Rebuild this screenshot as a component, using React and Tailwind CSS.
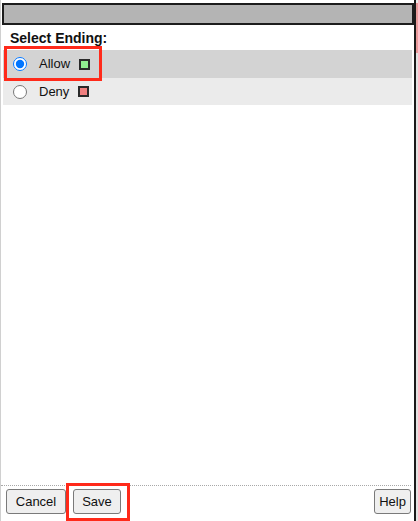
import React from "react";

const options = [
  { label: "Allow", color: "bg-[#90ee90]", checked: true, row: "bg-[#d3d3d3] h-[28px]" },
  { label: "Deny", color: "bg-[#f08080]", checked: false, row: "bg-[#ebebeb] h-[27px]" },
];

export default function App() {
  return (
    <div
      className="relative flex w-[418px] h-[521px] bg-white text-[#111]"
      style={{ fontFamily: '"Liberation Sans", Arial, sans-serif' }}
    >
      {/* main panel */}
      <div className="flex flex-col w-[414px] h-full border-l border-[#d0d0d0]">
        <div className="mt-[3px] ml-[1px] h-[22px] border-2 border-[#1c1c1c] bg-[#b4b4b4]" />

        <div className="mt-[5px] pl-[9px] text-[14px] leading-[16px] font-bold">
          Select Ending:
        </div>

        <div className="mt-[4px] ml-[2px] mr-[2px]">
          {options.map((opt) => (
            <div key={opt.label} className={`flex items-center pl-[10px] ${opt.row}`}>
              <input
                type="radio"
                name="ending"
                checked={opt.checked}
                readOnly
                className="m-0 w-[14px] h-[14px]"
              />
              <span className="ml-[12px] text-[13px] leading-[16px]">{opt.label}</span>
              <span className={`ml-[9px] w-[11px] h-[11px] border-2 border-[#2a2a2a] ${opt.color}`} />
            </div>
          ))}
        </div>

        <div className="flex-1" />

        <div className="mr-[3px] border-t border-dotted border-[#a8a8a8] pt-[3px] pb-[7px] pl-[5px] flex items-center">
          <button className="h-[25px] w-[60px] rounded-[3px] border border-[#7a7a7a] bg-[#efefef] text-[13px]">
            Cancel
          </button>
          <button className="ml-[7px] h-[25px] w-[48px] rounded-[3px] border border-[#7a7a7a] bg-[#efefef] text-[13px]">
            Save
          </button>
          <div className="flex-1" />
          <button className="h-[25px] w-[37px] rounded-[3px] border border-[#7a7a7a] bg-[#efefef] text-[13px]">
            Help
          </button>
        </div>
      </div>

      {/* panel edge */}
      <div className="w-[2px] h-full bg-[#1a1a1a]" />
      <div className="flex flex-col w-[2px] h-full bg-[#e2e2e2]">
        <div className="h-[3px] bg-[#ececec]" />
        <div className="h-[50px] bg-[#e99a9a]" />
      </div>

      {/* annotation highlights */}
      <div className="absolute left-[4px] top-[46px] w-[98px] h-[35px] border-[3px] border-[#ff2a1a]" />
      <div className="absolute left-[66px] top-[483px] w-[64px] h-[38px] border-[3px] border-[#ff2a1a]" />
    </div>
  );
}
